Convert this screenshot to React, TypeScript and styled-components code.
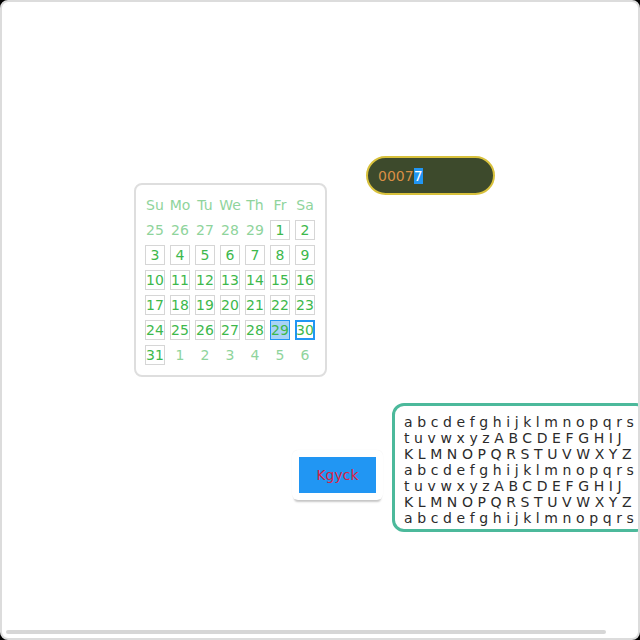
import React, { useEffect, useRef } from 'react';
import styled, { createGlobalStyle } from 'styled-components';

const GlobalStyle = createGlobalStyle`
  html, body {
    margin: 0;
    padding: 0;
    background: #000;
    font-family: "DejaVu Sans", "Noto Sans", sans-serif;
  }
`;

const Frame = styled.div`
  width: 640px;
  height: 640px;
  box-sizing: border-box;
  border: 2px solid #dcdcdc;
  border-radius: 8px;
  background: #fff;
  display: flex;
  flex-direction: column;
  overflow: hidden;
`;

const Viewport = styled.div`
  flex: 1;
  overflow: hidden;
`;

const ScrollTrack = styled.div`
  height: 8px;
  padding: 0 0 4px 4px;
  box-sizing: border-box;
`;

const Thumb = styled.div`
  height: 4px;
  border-radius: 2px;
  background: #d6d6d6;
`;

const Canvas = styled.div`
  display: flex;
  flex-direction: column;
  width: max-content;
`;

const Row = styled.div<{ $top: number }>`
  display: flex;
  align-items: flex-start;
  margin-top: ${(p) => p.$top}px;
`;

const Calendar = styled.div`
  margin-left: 132px;
  margin-top: 181px;
  border: 2px solid #dedede;
  border-radius: 8px;
  padding: 10px 10px 10px 9px;
  background: #fff;
`;

const Grid = styled.div`
  display: grid;
  grid-template-columns: repeat(7, 20px);
  grid-auto-rows: 20px;
  gap: 5px;
`;

const Head = styled.div`
  display: flex;
  align-items: center;
  justify-content: center;
  font-size: 14px;
  color: #8fd49c;
  white-space: nowrap;
`;

const Day = styled.div<{ $kind: 'out' | 'in' | 'selected' | 'today' }>`
  box-sizing: border-box;
  display: flex;
  align-items: center;
  justify-content: center;
  font-size: 14px;
  white-space: nowrap;
  color: ${(p) => (p.$kind === 'out' ? '#8fd49c' : '#3db84c')};
  border: ${(p) =>
    p.$kind === 'out'
      ? 'none'
      : p.$kind === 'today'
        ? '2px solid #2196f3'
        : p.$kind === 'selected'
          ? '1px solid #2196f3'
          : '1px solid #d6d6d6'};
  background: ${(p) => (p.$kind === 'selected' ? '#a8d3f6' : 'transparent')};
`;

const Pill = styled.input`
  margin-left: 39px;
  margin-top: 154px;
  width: 129px;
  height: 39px;
  box-sizing: border-box;
  border: 2px solid #d8c13c;
  border-radius: 20px;
  background: #3d4a2c;
  color: #d98f45;
  font-family: "DejaVu Sans", sans-serif;
  font-size: 14px;
  padding: 0 0 0 10px;
  outline: none;

  &::selection {
    background: #2196f3;
    color: #fff;
  }
`;

const ButtonCard = styled.div`
  margin-left: 290px;
  margin-top: 47px;
  padding: 7px;
  background: #fff;
  border-radius: 6px;
  box-shadow: 0 4px 2px -2px rgba(0, 0, 0, 0.22), 0 0 1px rgba(0, 0, 0, 0.08);
`;

const Button = styled.button`
  display: block;
  width: 77px;
  height: 36px;
  border: none;
  background: #2196f3;
  color: #dc1f45;
  font-family: "DejaVu Sans", sans-serif;
  font-size: 14px;
  padding: 0;
`;

const TextBox = styled.div`
  margin-left: 9px;
  margin-right: 28px;
  width: 256px;
  box-sizing: border-box;
  border: 3px solid #4cb99b;
  border-radius: 12px;
  padding: 8px 9px 3px;
  background: #fff;
  color: #2b2b2b;
  font-size: 14px;
  letter-spacing: 4.6px;
  line-height: 16px;
  white-space: pre;
  overflow: hidden;
`;

const Line = styled.div``;

const heads = ['Su', 'Mo', 'Tu', 'We', 'Th', 'Fr', 'Sa'];

type Cell = { n: number; kind: 'out' | 'in' | 'selected' | 'today' };

const buildDays = (): Cell[] => {
  const cells: Cell[] = [];
  for (let n = 25; n <= 29; n++) cells.push({ n, kind: 'out' });
  for (let n = 1; n <= 31; n++) {
    cells.push({ n, kind: n === 29 ? 'selected' : n === 30 ? 'today' : 'in' });
  }
  for (let n = 1; n <= 6; n++) cells.push({ n, kind: 'out' });
  return cells;
};

const lines = [
  'abcdefghijklmnopqrs',
  'tuvwxyzABCDEFGHIJ',
  'KLMNOPQRSTUVWXYZ',
  'abcdefghijklmnopqrs',
  'tuvwxyzABCDEFGHIJ',
  'KLMNOPQRSTUVWXYZ',
  'abcdefghijklmnopqrs',
];

// visible width over scroll width, for the horizontal scrollbar thumb
const VIEW = 636;
const CONTENT = 674;

export default function App() {
  const inputRef = useRef<HTMLInputElement>(null);

  useEffect(() => {
    const el = inputRef.current;
    if (el) {
      el.focus({ preventScroll: true });
      el.setSelectionRange(4, 5);
    }
  }, []);

  return (
    <>
      <GlobalStyle />
      <Frame>
        <Viewport>
          <Canvas>
            <Row $top={0}>
              <Calendar>
                <Grid>
                  {heads.map((h) => (
                    <Head key={h}>{h}</Head>
                  ))}
                  {buildDays().map((c, i) => (
                    <Day key={i} $kind={c.kind}>
                      {c.n}
                    </Day>
                  ))}
                </Grid>
              </Calendar>
              <Pill ref={inputRef} defaultValue="00077" />
            </Row>
            <Row $top={26}>
              <ButtonCard>
                <Button>Kgyck</Button>
              </ButtonCard>
              <TextBox>
                {lines.map((l, i) => (
                  <Line key={i}>{l}</Line>
                ))}
              </TextBox>
            </Row>
          </Canvas>
        </Viewport>
        <ScrollTrack>
          <Thumb style={{ width: Math.round((VIEW * VIEW) / CONTENT) }} />
        </ScrollTrack>
      </Frame>
    </>
  );
}
